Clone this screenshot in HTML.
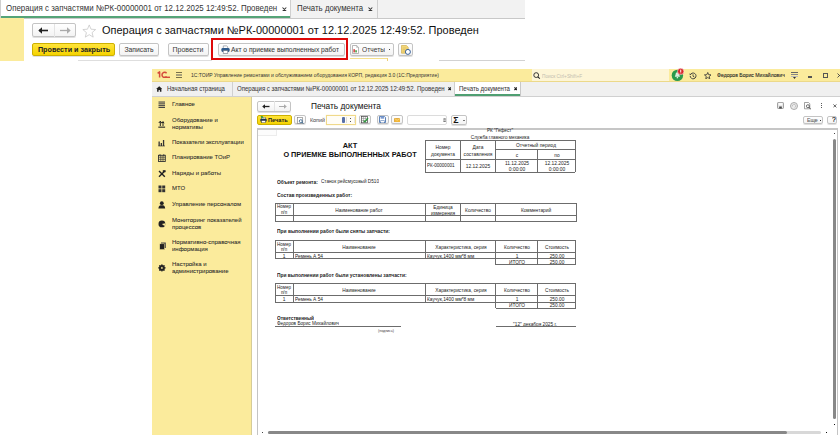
<!DOCTYPE html>
<html><head><meta charset="utf-8">
<style>
*{box-sizing:border-box;margin:0;padding:0}
html,body{width:840px;height:435px;overflow:hidden;background:#fff;font-family:"Liberation Sans",sans-serif;color:#333;position:relative}
.a{position:absolute}
.btn{position:absolute;border:1px solid #c4c4c4;border-radius:2px;background:linear-gradient(#fff,#f3f3f3);box-shadow:0 1px 0 rgba(0,0,0,.12)}
.t{position:absolute;white-space:nowrap;line-height:1;transform-origin:0 0}
</style></head><body>
<div class="a" style="left:0px;top:0px;width:525px;height:18.8px;background:#f2f2f2;border-bottom:1px solid #c8c8c8"></div>
<div class="a" style="left:0px;top:0px;width:1px;height:18px;background:#cfcfcf"></div>
<div class="a" style="left:1px;top:0px;width:289px;height:17.6px;background:#fff"></div>
<div class="a" style="left:1.00px;top:16.30px;width:289.00px;height:1.8px;background:#55a478"></div>
<div class="a" style="left:290.00px;top:0.00px;width:1px;height:18.00px;background:#cfcfcf"></div>
<div class="a" style="left:377.00px;top:0.00px;width:1px;height:18.00px;background:#cfcfcf"></div>
<div class="t" style="left:6.00px;top:4.22px;font-size:31.60px;font-weight:normal;color:#333;transform:scale(0.25,0.275);">Операция с запчастями №РК-00000001 от 12.12.2025 12:49:52. Проведен</div>
<svg class="a" style="left:282px;top:6.6px" width="4.8" height="4.8" viewBox="0 0 4.8 4.8"><path d="M.5 .5 L4.3 4.3 M4.3 .5 L.5 4.3" stroke="#333" stroke-width="1.05"/></svg>
<div class="t" style="left:297.00px;top:4.25px;font-size:31.40px;font-weight:normal;color:#333;transform:scale(0.25,0.275);">Печать документа</div>
<svg class="a" style="left:368.2px;top:6.6px" width="4.8" height="4.8" viewBox="0 0 4.8 4.8"><path d="M.5 .5 L4.3 4.3 M4.3 .5 L.5 4.3" stroke="#333" stroke-width="1.05"/></svg>
<div class="a" style="left:0px;top:18px;width:24.4px;height:43px;background:#fbeb9c"></div>
<div class="btn" style="left:31.5px;top:23.3px;width:44px;height:14.2px;"></div>
<div class="a" style="left:54.00px;top:24.00px;width:1px;height:13.00px;background:#e4e4e4"></div>
<svg class="a" style="left:38px;top:27px" width="11" height="7" viewBox="0 0 11 7"><path d="M1 3.5 H10" stroke="#222" stroke-width="1.6"/><path d="M0.3 3.5 L4 0.3 V6.7Z" fill="#222"/></svg>
<svg class="a" style="left:60px;top:27px" width="11" height="7" viewBox="0 0 11 7"><path d="M0 3.5 H9" stroke="#aaa" stroke-width="1.3"/><path d="M10.7 3.5 L7 0.3 V6.7Z" fill="#aaa"/></svg>
<svg class="a" style="left:81.8px;top:23.6px" width="14.5" height="14.5" viewBox="0 0 24 24"><path d="M12 1.5 L14.9 8.6 L22.6 9.2 L16.7 14.2 L18.5 21.7 L12 17.7 L5.5 21.7 L7.3 14.2 L1.4 9.2 L9.1 8.6Z" fill="none" stroke="#c8c8c8" stroke-width="1.3" stroke-linejoin="round"/></svg>
<div class="t" style="left:101.50px;top:24.96px;font-size:43.92px;font-weight:normal;color:#111;transform:scale(0.25,0.25);">Операция с запчастями №РК-00000001 от 12.12.2025 12:49:52. Проведен</div>
<div class="a" style="left:32px;top:43px;width:83px;height:13px;background:linear-gradient(#ffe43a,#f5d300);border:1px solid #cdb000;border-radius:2px;box-shadow:0 1px 0 rgba(0,0,0,.12)"></div>
<div class="t" style="left:73.70px;top:45.54px;font-size:28.80px;font-weight:bold;color:#222;transform:scale(0.25,0.2625) translateX(-50%);">Провести и закрыть</div>
<div class="btn" style="left:118.5px;top:43.3px;width:40.5px;height:12.3px;"></div>
<div class="t" style="left:138.60px;top:45.64px;font-size:27.16px;font-weight:normal;color:#3a3a3a;transform:scale(0.25,0.265) translateX(-50%);-webkit-text-stroke:0.20px #3a3a3a;">Записать</div>
<div class="btn" style="left:167.5px;top:43.3px;width:41.3px;height:12.3px;"></div>
<div class="t" style="left:188.30px;top:45.75px;font-size:28.00px;font-weight:normal;color:#3a3a3a;transform:scale(0.25,0.25) translateX(-50%);">Провести</div>
<div class="a" style="left:211.2px;top:38px;width:136.6px;height:22.4px;border:2.4px solid #dd0a0a"></div>
<div class="btn" style="left:217.5px;top:43.3px;width:127.5px;height:12.3px;"></div>
<svg class="a" style="left:220.6px;top:45px" width="9" height="9" viewBox="0 0 9 9"><path d="M2.3 3 V0.9 H5.8 L6.7 1.8 V3" fill="#fff" stroke="#8a8f99" stroke-width=".7"/><rect x="0.4" y="3" width="8.2" height="3.9" rx="1.3" fill="#2f5b8c"/><rect x="2.2" y="5.6" width="4.6" height="2.8" fill="#fff" stroke="#6a7180" stroke-width=".6"/></svg>
<div class="t" style="left:231.00px;top:45.71px;font-size:26.72px;font-weight:normal;color:#3a3a3a;transform:scale(0.25,0.265);-webkit-text-stroke:0.20px #3a3a3a;">Акт о приемке выполненных работ</div>
<div class="btn" style="left:350px;top:43.3px;width:43.5px;height:12.3px;"></div>
<svg class="a" style="left:352.2px;top:45.0px" width="7" height="9" viewBox="0 0 7 9"><path d="M.5 .5 H4.6 L6.5 2.4 V8.5 H.5Z" fill="#fff" stroke="#9a9a9a" stroke-width=".7"/><path d="M4.6 .5 V2.4 H6.5" fill="none" stroke="#9a9a9a" stroke-width=".5"/><rect x="1.4" y="4.2" width="1.5" height="3.2" fill="#d23a3a"/><rect x="3.3" y="5.2" width="1.5" height="2.2" fill="#3a9a3a"/></svg>
<div class="t" style="left:361.80px;top:45.72px;font-size:26.60px;font-weight:normal;color:#3a3a3a;transform:scale(0.25,0.265);">Отчеты</div>
<div class="a" style="left:389px;top:49.2px;width:1.3px;height:1.3px;background:#444"></div>
<div class="btn" style="left:397.5px;top:43.3px;width:15px;height:12.3px;"></div>
<svg class="a" style="left:400.6px;top:44.6px" width="10" height="10" viewBox="0 0 10 10"><path d="M.5 .5 H5.4 L7.2 2.3 V8.2 H.5Z" fill="#f3d77a" stroke="#c9a640" stroke-width=".6"/><path d="M1.6 3 H5.6 M1.6 4.6 H4.6 M1.6 6.2 H4" stroke="#d8b85a" stroke-width=".6"/><circle cx="6.9" cy="6.9" r="2.5" fill="#fff" stroke="#355f9a" stroke-width="1"/></svg>
<div class="a" style="left:78.00px;top:60.00px;width:133.50px;height:1.2px;background:#dedede"></div>
<div class="a" style="left:349.50px;top:57.95px;width:38.50px;height:1.3px;background:#f5df8c"></div>
<div class="a" style="left:386.90px;top:58.20px;width:1.2px;height:3.00px;background:#ecd078"></div>
<div class="a" style="left:439.00px;top:59.90px;width:86.00px;height:1.4px;background:#d2d2d2"></div>
<div class="a" style="left:152px;top:68.8px;width:688px;height:13px;background:#fbeb9c;border-bottom:1px solid #ecd98a"></div>
<svg class="a" style="left:156.6px;top:70.8px" width="13.6" height="7.2" viewBox="0 0 13.6 7.2"><path d="M0.6 2.4 L2.6 0.9 V6.6" fill="none" stroke="#d44a3a" stroke-width="1.5" stroke-linejoin="round"/><path d="M9.6 2.2 A2.6 2.6 0 1 0 9.6 5.6" fill="none" stroke="#d44a3a" stroke-width="1.5"/><rect x="7.2" y="5.6" width="6.3" height="1.4" fill="#d44a3a"/></svg>
<div class="a" style="left:176.00px;top:72.00px;width:6.00px;height:1.0px;background:#77704a"></div>
<div class="a" style="left:176.00px;top:74.40px;width:6.20px;height:1.2px;background:#a9a27a"></div>
<div class="a" style="left:176.00px;top:77.00px;width:6.00px;height:1.0px;background:#77704a"></div>
<div class="t" style="left:191.00px;top:72.33px;font-size:20.20px;font-weight:normal;color:#333;transform:scale(0.25,0.285);">1С:ТОИР Управление ремонтами и обслуживанием оборудования КОРП, редакция 3.0 (1С:Предприятие)</div>
<div class="a" style="left:532px;top:69px;width:137.3px;height:12.3px;background:#fdf5d6"></div>
<svg class="a" style="left:533px;top:71.5px" width="8" height="7" viewBox="0 0 8 7"><circle cx="3.2" cy="3.1" r="2.4" fill="none" stroke="#222" stroke-width=".9"/><line x1="4.9" y1="4.8" x2="6.8" y2="6.6" stroke="#222" stroke-width="1.1"/></svg>
<div class="t" style="left:542.00px;top:72.68px;font-size:19.20px;font-weight:normal;color:#c4c0b0;transform:scale(0.25,0.295);">Поиск Ctrl+Shift+F</div>
<svg class="a" style="left:671px;top:68px" width="14" height="14" viewBox="0 0 14 14"><circle cx="6.4" cy="7.4" r="5.7" fill="#2a9a4a"/><path d="M6.4 4.2 C5 4.2 4.6 5.4 4.6 6.6 L3.8 8.8 H9 L8.2 6.6 C8.2 5.4 7.8 4.2 6.4 4.2Z" fill="#d8efdc"/><rect x="5.7" y="9" width="1.4" height="1.3" fill="#d8efdc"/><circle cx="9.7" cy="3.4" r="3.2" fill="#d8262a" stroke="#fff" stroke-width=".5"/><rect x="9.25" y="1.6" width=".95" height="2.6" fill="#fff"/><rect x="9.25" y="4.6" width=".95" height=".7" fill="#fff"/></svg>
<svg class="a" style="left:688.5px;top:71.5px" width="8" height="8" viewBox="0 0 8 8"><path d="M1.2 4 A2.9 2.9 0 1 0 2 1.9" fill="none" stroke="#333" stroke-width=".9"/><path d="M0.6 1.2 L2.4 2.4 L0.8 3.2Z" fill="#333"/><path d="M4 2.3 V4.2 L5.3 5" fill="none" stroke="#333" stroke-width=".8"/></svg>
<svg class="a" style="left:703.8px;top:71.8px" width="7.5" height="7.5" viewBox="0 0 24 24"><path d="M12 1.5 L14.9 8.6 L22.6 9.2 L16.7 14.2 L18.5 21.7 L12 17.7 L5.5 21.7 L7.3 14.2 L1.4 9.2 L9.1 8.6Z" fill="none" stroke="#333" stroke-width="2.6" stroke-linejoin="round"/></svg>
<div class="t" style="left:717.40px;top:72.28px;font-size:20.56px;font-weight:normal;color:#222;transform:scale(0.25,0.285);-webkit-text-stroke:0.32px #222;">Федоров Борис Михайлович</div>
<div class="a" style="left:791.00px;top:72.00px;width:7.00px;height:1px;background:#666"></div>
<div class="a" style="left:791.00px;top:74.00px;width:7.00px;height:1px;background:#888"></div>
<div class="a" style="left:791.00px;top:76.00px;width:7.00px;height:1px;background:#bbb"></div>
<svg class="a" style="left:793px;top:77.3px" width="3" height="2" viewBox="0 0 3 2"><path d="M0 0H3L1.5 2Z" fill="#333"/></svg>
<div class="a" style="left:807.60px;top:76.45px;width:4.40px;height:1.1px;background:#555"></div>
<div class="a" style="left:823px;top:72.8px;width:5px;height:4.8px;border:1px solid #555"></div>
<svg class="a" style="left:837.4px;top:72.6px" width="5" height="5" viewBox="0 0 5 5"><path d="M.5 .5 L4.5 4.5 M4.5 .5 L.5 4.5" stroke="#444" stroke-width=".9"/></svg>
<div class="a" style="left:152px;top:81.8px;width:688px;height:15.2px;background:#f0f0f0;border-bottom:1px solid #d0d0d0"></div>
<svg class="a" style="left:155.5px;top:85.5px" width="6.5" height="6" viewBox="0 0 6.5 6"><path d="M3.25 0.2 L6.4 3 H5.4 V5.8 H3.9 V4 H2.6 V5.8 H1.1 V3 H0.1Z" fill="#222"/></svg>
<div class="t" style="left:167.00px;top:86.31px;font-size:23.96px;font-weight:normal;color:#3a3a3a;transform:scale(0.25,0.265);-webkit-text-stroke:0.20px #3a3a3a;">Начальная страница</div>
<div class="a" style="left:232.00px;top:82.00px;width:1px;height:14.00px;background:#d0d0d0"></div>
<div class="t" style="left:237.00px;top:86.27px;font-size:24.20px;font-weight:normal;color:#3a3a3a;transform:scale(0.25,0.265);-webkit-text-stroke:0.20px #3a3a3a;">Операция с запчастями №РК-00000001 от 12.12.2025 12:49:52. Проведен</div>
<svg class="a" style="left:448.1px;top:87.3px" width="3.4" height="3.4" viewBox="0 0 3.4 3.4"><path d="M.4 .4 L3 3 M3 .4 L.4 3" stroke="#222" stroke-width="1.15"/></svg>
<div class="a" style="left:454.00px;top:82.00px;width:1px;height:14.00px;background:#d0d0d0"></div>
<div class="a" style="left:455px;top:82px;width:65px;height:14px;background:#fff"></div>
<div class="a" style="left:455.00px;top:94.15px;width:65.00px;height:1.7px;background:#4f9f72"></div>
<div class="a" style="left:520.00px;top:82.00px;width:1px;height:14.00px;background:#c8c8c8"></div>
<div class="t" style="left:459.00px;top:86.27px;font-size:24.20px;font-weight:normal;color:#3a3a3a;transform:scale(0.25,0.265);-webkit-text-stroke:0.20px #3a3a3a;">Печать документа</div>
<svg class="a" style="left:513.6px;top:87.3px" width="3.4" height="3.4" viewBox="0 0 3.4 3.4"><path d="M.4 .4 L3 3 M3 .4 L.4 3" stroke="#222" stroke-width="1.15"/></svg>
<div class="a" style="left:152px;top:97px;width:100px;height:339px;background:#fbeb9c;border-right:1px solid #d6cc98"></div>
<div class="t" style="left:171.60px;top:101.03px;font-size:24.00px;font-weight:normal;color:#2a2a2a;transform:scale(0.25,0.255);-webkit-text-stroke:0.24px #2a2a2a;">Главное</div>
<svg class="a" style="left:158.4px;top:101px" width="8" height="8" viewBox="0 0 8 8"><rect x=".5" y=".5" width="6.5" height="1.1" fill="#444"/><rect x=".5" y="2.3" width="6.5" height="1.1" fill="#444"/><rect x=".5" y="4.1" width="6.5" height="1.1" fill="#444"/><rect x=".5" y="5.9" width="6.5" height="1.1" fill="#444"/></svg>
<div class="t" style="left:171.60px;top:116.63px;font-size:24.00px;font-weight:normal;color:#2a2a2a;transform:scale(0.25,0.255);-webkit-text-stroke:0.24px #2a2a2a;">Оборудование и</div>
<div class="t" style="left:171.60px;top:123.63px;font-size:24.00px;font-weight:normal;color:#2a2a2a;transform:scale(0.25,0.255);-webkit-text-stroke:0.24px #2a2a2a;">нормативы</div>
<svg class="a" style="left:158.4px;top:120px" width="8" height="8" viewBox="0 0 8 8"><path d="M2.3 6 V1.5 M0.8 3 L2.3 1.2 L3.8 3 M5 6 V1.5 M3.9 3.2 L5 1.8 L6.1 3.2" stroke="#222" stroke-width="1" fill="none"/><rect x=".3" y="6.6" width="6.8" height="1.1" fill="#222"/></svg>
<div class="t" style="left:171.60px;top:138.83px;font-size:24.00px;font-weight:normal;color:#2a2a2a;transform:scale(0.25,0.255);-webkit-text-stroke:0.24px #2a2a2a;">Показатели эксплуатации</div>
<svg class="a" style="left:158.4px;top:139px" width="8" height="8" viewBox="0 0 8 8"><rect x=".5" y="2.5" width="1.3" height="4.5" fill="#333"/><rect x="2.7" y="4" width="1.3" height="3" fill="#333"/><rect x="4.9" y="1" width="1.3" height="6" fill="#333"/><rect x=".3" y="6.6" width="6.6" height=".7" fill="#333"/></svg>
<div class="t" style="left:171.60px;top:153.83px;font-size:24.00px;font-weight:normal;color:#2a2a2a;transform:scale(0.25,0.255);-webkit-text-stroke:0.24px #2a2a2a;">Планирование ТОиР</div>
<svg class="a" style="left:158.4px;top:153.5px" width="8" height="8" viewBox="0 0 8 8"><rect x=".5" y="1.3" width="6.8" height="6.2" fill="none" stroke="#333" stroke-width=".9"/><path d="M.5 3.2 H7.3 M2.8 1.3 V7.5 M5 1.3 V7.5 M.5 5.3 H7.3" stroke="#333" stroke-width=".7"/><path d="M2 .2 V2 M5.8 .2 V2" stroke="#333" stroke-width=".9"/></svg>
<div class="t" style="left:171.60px;top:170.03px;font-size:24.00px;font-weight:normal;color:#2a2a2a;transform:scale(0.25,0.255);-webkit-text-stroke:0.24px #2a2a2a;">Наряды и работы</div>
<svg class="a" style="left:158.4px;top:170px" width="8" height="8" viewBox="0 0 8 8"><path d="M1 1 L6.8 6.8 M6.8 1 L1 6.8" stroke="#222" stroke-width="1.4"/><rect x="4.8" y=".2" width="2.8" height="2" fill="#222"/></svg>
<div class="t" style="left:171.60px;top:185.33px;font-size:24.00px;font-weight:normal;color:#2a2a2a;transform:scale(0.25,0.255);-webkit-text-stroke:0.24px #2a2a2a;">МТО</div>
<svg class="a" style="left:158.4px;top:185.3px" width="8" height="8" viewBox="0 0 8 8"><rect x=".5" y=".5" width="3" height="3" fill="#333"/><rect x="4.2" y=".5" width="3" height="3" fill="#333"/><rect x=".5" y="4.2" width="3" height="3" fill="#333"/><rect x="4.2" y="4.2" width="3" height="3" fill="#333"/></svg>
<div class="t" style="left:171.60px;top:201.13px;font-size:24.00px;font-weight:normal;color:#2a2a2a;transform:scale(0.25,0.255);-webkit-text-stroke:0.24px #2a2a2a;">Управление персоналом</div>
<svg class="a" style="left:158.4px;top:201px" width="8" height="8" viewBox="0 0 8 8"><circle cx="3.8" cy="2.2" r="1.9" fill="#222"/><path d="M.4 7.6 C.6 4.8 2 4.3 3.8 4.3 C5.6 4.3 7 4.8 7.2 7.6Z" fill="#222"/></svg>
<div class="t" style="left:171.60px;top:216.83px;font-size:24.00px;font-weight:normal;color:#2a2a2a;transform:scale(0.25,0.255);-webkit-text-stroke:0.24px #2a2a2a;">Мониторинг показателей</div>
<div class="t" style="left:171.60px;top:223.83px;font-size:24.00px;font-weight:normal;color:#2a2a2a;transform:scale(0.25,0.255);-webkit-text-stroke:0.24px #2a2a2a;">процессов</div>
<svg class="a" style="left:158.2px;top:219.7px" width="8" height="8" viewBox="0 0 8 8"><circle cx="3.9" cy="3.9" r="3.4" fill="#222"/><path d="M3.9 3.9 L7.3 3.2 A3.4 3.4 0 0 1 6.5 6 Z" fill="#fbeb9c"/></svg>
<div class="t" style="left:171.60px;top:238.53px;font-size:24.00px;font-weight:normal;color:#2a2a2a;transform:scale(0.25,0.255);-webkit-text-stroke:0.24px #2a2a2a;">Нормативно-справочная</div>
<div class="t" style="left:171.60px;top:245.53px;font-size:24.00px;font-weight:normal;color:#2a2a2a;transform:scale(0.25,0.255);-webkit-text-stroke:0.24px #2a2a2a;">информация</div>
<svg class="a" style="left:158.6px;top:241.8px" width="8" height="8" viewBox="0 0 8 8"><rect x="2" y=".5" width="4.8" height="5.5" fill="#444"/><rect x=".7" y="1.8" width="4.8" height="5.8" fill="#222" stroke="#fbeb9c" stroke-width=".5"/></svg>
<div class="t" style="left:171.60px;top:261.03px;font-size:24.00px;font-weight:normal;color:#2a2a2a;transform:scale(0.25,0.255);-webkit-text-stroke:0.24px #2a2a2a;">Настройка и</div>
<div class="t" style="left:171.60px;top:268.03px;font-size:24.00px;font-weight:normal;color:#2a2a2a;transform:scale(0.25,0.255);-webkit-text-stroke:0.24px #2a2a2a;">администрирование</div>
<svg class="a" style="left:158.4px;top:264.2px" width="8" height="8" viewBox="0 0 8 8"><circle cx="3.9" cy="3.9" r="2.2" fill="none" stroke="#222" stroke-width="1.5"/><path d="M3.9 .2 V7.6 M.2 3.9 H7.6 M1.3 1.3 L6.5 6.5 M6.5 1.3 L1.3 6.5" stroke="#222" stroke-width="1.1"/><circle cx="3.9" cy="3.9" r=".9" fill="#fbeb9c"/></svg>
<div class="t" style="left:311.00px;top:101.94px;font-size:33.20px;font-weight:normal;color:#111;transform:scale(0.25,0.25);">Печать документа</div>
<div class="btn" style="left:257.2px;top:100.5px;width:33.4px;height:11px;"></div>
<div class="a" style="left:274.00px;top:101.00px;width:1px;height:10.00px;background:#e4e4e4"></div>
<svg class="a" style="left:261.5px;top:103.8px" width="8" height="5" viewBox="0 0 8 5"><path d="M1 2.5 H7.5" stroke="#222" stroke-width="1.3"/><path d="M0.2 2.5 L3 0.2 V4.8Z" fill="#222"/></svg>
<svg class="a" style="left:278.5px;top:103.8px" width="8" height="5" viewBox="0 0 8 5"><path d="M0 2.5 H6.5" stroke="#aaa" stroke-width="1"/><path d="M7.8 2.5 L5 0.2 V4.8Z" fill="#aaa"/></svg>
<div class="a" style="left:257.2px;top:115.3px;width:34.6px;height:9.6px;background:linear-gradient(#ffe43a,#f5d300);border:1px solid #cdb000;border-radius:2px"></div>
<svg class="a" style="left:259.6px;top:116.2px" width="7" height="7" viewBox="0 0 7 7"><rect x="1.6" y="1.2" width="3.8" height="2" fill="#fff" stroke="#555" stroke-width=".5"/><rect x=".3" y="2.8" width="6.4" height="2.8" rx=".9" fill="#1f3550"/><rect x="1.6" y="4.6" width="3.8" height="2.2" fill="#fff" stroke="#444" stroke-width=".5"/><path d="M.6 .1 L3.2 .1 L2.6 .8 L3.8 2 L3 2.6 L1.9 1.4 L1.2 2.1Z" fill="#3aa040"/></svg>
<div class="t" style="left:268.00px;top:116.58px;font-size:22.60px;font-weight:bold;color:#222;transform:scale(0.25,0.275);">Печать</div>
<div class="btn" style="left:294.3px;top:115.4px;width:11.4px;height:9px;"></div>
<svg class="a" style="left:296.5px;top:116.5px" width="7" height="7" viewBox="0 0 7 7"><rect x=".5" y=".4" width="4.8" height="6" fill="#fff" stroke="#777" stroke-width=".6"/><circle cx="3.8" cy="4.2" r="1.5" fill="none" stroke="#2b5c8a" stroke-width=".8"/><path d="M4.8 5.2 L6.6 6.8" stroke="#2b5c8a" stroke-width=".9"/></svg>
<div class="t" style="left:309.70px;top:116.98px;font-size:21.44px;font-weight:normal;color:#555;transform:scale(0.25,0.265);-webkit-text-stroke:0.20px #555;">Копий</div>
<div class="a" style="left:326.4px;top:115.1px;width:30px;height:9.6px;border:1px solid #f0d98a;background:#fffdf6;box-shadow:0 0 1px #f6e6a8"></div>
<div class="a" style="left:341.8px;top:116.6px;width:2.8px;height:6.6px;background:#5870a8;border-radius:1px"></div>
<div class="a" style="left:345.85px;top:116.50px;width:0.7px;height:6.70px;background:#dcdcdc"></div>
<div class="a" style="left:350.1px;top:117.6px;width:1px;height:1px;background:#555"></div>
<div class="a" style="left:350.1px;top:120.6px;width:1px;height:1px;background:#555"></div>
<div class="a" style="left:353.85px;top:116.50px;width:0.7px;height:6.70px;background:#e4e4e4"></div>
<div class="btn" style="left:359.3px;top:115.4px;width:11.4px;height:9px;"></div>
<svg class="a" style="left:361.3px;top:116.3px" width="7.5" height="7.5" viewBox="0 0 7.5 7.5"><rect x=".4" y=".4" width="6.2" height="6.4" fill="#fff" stroke="#444" stroke-width=".7"/><path d="M.4 2.4 H6.6 M.4 4.5 H6.6 M2.4 .4 V6.8 M4.4 .4 V6.8" stroke="#666" stroke-width=".45"/><path d="M2.6 4.6 L3.9 5.9 L7 2.2" fill="none" stroke="#2a9a3a" stroke-width="1.3"/></svg>
<div class="btn" style="left:377px;top:115.4px;width:11.6px;height:9px;"></div>
<svg class="a" style="left:379.4px;top:116.4px" width="7" height="7" viewBox="0 0 7 7"><path d="M.5 .5 H5.6 L6.5 1.4 V6.5 H.5Z" fill="#fff" stroke="#4a74b0" stroke-width=".9"/><rect x="1.6" y=".5" width="3.6" height="2.2" fill="#7d9bd0"/><rect x="1.5" y="4.2" width="4" height="2.3" fill="#4a74b0"/><rect x="2" y="4.7" width="3" height="1.8" fill="#fff"/></svg>
<div class="btn" style="left:391.4px;top:115.4px;width:11.5px;height:9px;"></div>
<svg class="a" style="left:393.8px;top:117.6px" width="6.4" height="4.4" viewBox="0 0 6.4 4.4"><rect x=".2" y=".2" width="6" height="4" fill="#f2b73a" stroke="#c88a20" stroke-width=".4"/><path d="M.2 .2 L3.2 2.4 L6.2 .2" fill="none" stroke="#fbe2a0" stroke-width=".6"/></svg>
<div class="a" style="left:407px;top:115.1px;width:40px;height:9.6px;border:1px solid #dcdcdc;border-radius:2px;background:#fff"></div>
<svg class="a" style="left:443.2px;top:117.6px" width="3.2" height="4.4" viewBox="0 0 3.2 4.4"><ellipse cx="1.6" cy="2.2" rx="1.5" ry="2.1" fill="#c4c4c4"/><rect x=".5" y=".5" width="2.2" height=".9" fill="#777"/><rect x=".5" y="3" width="2.2" height=".9" fill="#777"/></svg>
<div class="btn" style="left:451.4px;top:115.1px;width:15.3px;height:9.6px;"></div>
<div class="t" style="left:456.30px;top:115.36px;font-size:35.20px;font-weight:bold;color:#111;transform:scale(0.25,0.25) translateX(-50%);">Σ</div>
<svg class="a" style="left:462.5px;top:119.5px" width="2" height="1.5" viewBox="0 0 2 1.5"><path d="M0 0H2L1 1.5Z" fill="#333"/></svg>
<svg class="a" style="left:776.6px;top:102.2px" width="7" height="7" viewBox="0 0 7 7"><rect x=".5" y=".5" width="6" height="6" rx=".7" fill="#e6e6e6" stroke="#8c8c8c" stroke-width=".8"/><rect x="1.8" y=".9" width="3.4" height="2.3" fill="#fafafa"/><rect x="2.2" y="4.5" width="2.6" height="2" fill="#4a4a4a"/></svg>
<svg class="a" style="left:789.9px;top:101.9px" width="8" height="8" viewBox="0 0 8 8"><circle cx="4" cy="4" r="3.5" fill="#ececec" stroke="#a4a4a4" stroke-width=".9"/><path d="M2.4 4.4 A1.7 1.7 0 1 1 4.6 5.6" fill="none" stroke="#b4b4b4" stroke-width=".8"/></svg>
<svg class="a" style="left:804px;top:102px" width="7.5" height="7.5" viewBox="0 0 7.5 7.5"><path d="M.5 .5 H4.5 L5.8 1.8 V6.8 H.5Z" fill="#fff" stroke="#7a7a7a" stroke-width=".7"/><circle cx="3.9" cy="4.2" r="1.5" fill="none" stroke="#444" stroke-width=".75"/><path d="M4.9 5.3 L6.9 7.2" stroke="#444" stroke-width=".9"/></svg>
<div class="a" style="left:820.5px;top:103.1px;width:1.4px;height:1.4px;background:#5a5a5a"></div>
<div class="a" style="left:820.5px;top:105.1px;width:1.4px;height:1.4px;background:#5a5a5a"></div>
<div class="a" style="left:820.5px;top:107.1px;width:1.4px;height:1.4px;background:#5a5a5a"></div>
<svg class="a" style="left:832.9px;top:103.8px" width="3.8" height="3.8" viewBox="0 0 3.8 3.8"><path d="M.4 .4 L3.4 3.4 M3.4 .4 L.4 3.4" stroke="#333" stroke-width=".75"/></svg>
<div class="btn" style="left:802.9px;top:115.5px;width:20.4px;height:8.8px;"></div>
<div class="t" style="left:807.30px;top:116.91px;font-size:21.20px;font-weight:normal;color:#555;transform:scale(0.25,0.265);-webkit-text-stroke:0.20px #555;">Еще</div>
<div class="a" style="left:819.6px;top:119.6px;width:1.1px;height:1.1px;background:#333"></div>
<div class="btn" style="left:826.7px;top:115.5px;width:10.4px;height:8.8px;"></div>
<div class="t" style="left:832.00px;top:115.94px;font-size:27.20px;font-weight:normal;color:#111;transform:scale(0.25,0.265);-webkit-text-stroke:0.60px #111;">?</div>
<div class="a" style="left:257px;top:128px;width:581px;height:310px;border:1px solid #c4c4c4;border-top:2px solid #c6c6c6"></div>
<div class="a" style="left:258px;top:130px;width:19px;height:5.5px;border-right:1px solid #ececec;border-bottom:1px solid #ececec;background:#fcfcfc"></div>
<div class="t" style="left:500.00px;top:127.98px;font-size:18.60px;font-weight:normal;color:#222;transform:scale(0.25,0.295) translateX(-50%);">РК "Гефест"</div>
<div class="t" style="left:500.00px;top:134.68px;font-size:18.60px;font-weight:normal;color:#222;transform:scale(0.25,0.295) translateX(-50%);">Служба главного механика</div>
<div class="a" style="left:425.00px;top:140.00px;width:150.00px;height:1.0px;background:#6c6c6c"></div>
<div class="a" style="left:425.00px;top:172.00px;width:150.00px;height:1.0px;background:#6c6c6c"></div>
<div class="a" style="left:425.00px;top:140.00px;width:1.0px;height:32.00px;background:#6c6c6c"></div>
<div class="a" style="left:575.00px;top:140.00px;width:1.0px;height:32.00px;background:#6c6c6c"></div>
<div class="a" style="left:425.00px;top:159.00px;width:150.00px;height:1.0px;background:#6c6c6c"></div>
<div class="a" style="left:496.00px;top:149.00px;width:79.00px;height:1.0px;background:#6c6c6c"></div>
<div class="a" style="left:460.00px;top:140.00px;width:1.0px;height:32.00px;background:#6c6c6c"></div>
<div class="a" style="left:495.00px;top:140.00px;width:1.0px;height:32.00px;background:#6c6c6c"></div>
<div class="a" style="left:537.00px;top:150.00px;width:1.0px;height:22.00px;background:#6c6c6c"></div>
<div class="t" style="left:443.00px;top:144.12px;font-size:19.60px;font-weight:normal;color:#222;transform:scale(0.25,0.295) translateX(-50%);">Номер</div>
<div class="t" style="left:443.00px;top:150.52px;font-size:19.60px;font-weight:normal;color:#222;transform:scale(0.25,0.295) translateX(-50%);">документа</div>
<div class="t" style="left:478.00px;top:144.12px;font-size:19.60px;font-weight:normal;color:#222;transform:scale(0.25,0.295) translateX(-50%);">Дата</div>
<div class="t" style="left:478.00px;top:150.52px;font-size:19.60px;font-weight:normal;color:#222;transform:scale(0.25,0.295) translateX(-50%);">составления</div>
<div class="t" style="left:535.50px;top:142.12px;font-size:19.60px;font-weight:normal;color:#222;transform:scale(0.25,0.295) translateX(-50%);">Отчетный период</div>
<div class="t" style="left:516.60px;top:152.32px;font-size:19.60px;font-weight:normal;color:#222;transform:scale(0.25,0.295) translateX(-50%);">с</div>
<div class="t" style="left:556.60px;top:152.32px;font-size:19.60px;font-weight:normal;color:#222;transform:scale(0.25,0.295) translateX(-50%);">по</div>
<div class="t" style="left:427.00px;top:163.34px;font-size:18.24px;font-weight:normal;color:#222;transform:scale(0.25,0.295);">РК-00000001</div>
<div class="t" style="left:478.00px;top:163.12px;font-size:19.60px;font-weight:normal;color:#222;transform:scale(0.25,0.295) translateX(-50%);">12.12.2025</div>
<div class="t" style="left:516.60px;top:160.12px;font-size:19.60px;font-weight:normal;color:#222;transform:scale(0.25,0.295) translateX(-50%);">11.12.2025</div>
<div class="t" style="left:516.60px;top:165.92px;font-size:19.60px;font-weight:normal;color:#222;transform:scale(0.25,0.295) translateX(-50%);">0:00:00</div>
<div class="t" style="left:556.60px;top:160.12px;font-size:19.60px;font-weight:normal;color:#222;transform:scale(0.25,0.295) translateX(-50%);">12.12.2025</div>
<div class="t" style="left:556.60px;top:165.92px;font-size:19.60px;font-weight:normal;color:#222;transform:scale(0.25,0.295) translateX(-50%);">0:00:00</div>
<div class="t" style="left:350.30px;top:141.60px;font-size:29.80px;font-weight:bold;color:#111;transform:scale(0.25,0.25) translateX(-50%);">АКТ</div>
<div class="t" style="left:350.30px;top:151.49px;font-size:29.20px;font-weight:bold;color:#111;transform:scale(0.25,0.25) translateX(-50%);">О ПРИЕМКЕ ВЫПОЛНЕННЫХ РАБОТ</div>
<div class="t" style="left:276.50px;top:179.35px;font-size:19.40px;font-weight:bold;color:#222;transform:scale(0.25,0.295);">Объект ремонта:</div>
<div class="t" style="left:321.00px;top:179.48px;font-size:18.64px;font-weight:normal;color:#222;transform:scale(0.25,0.295);">Станок рейсмусовый D510</div>
<div class="t" style="left:276.50px;top:191.99px;font-size:19.80px;font-weight:bold;color:#222;transform:scale(0.25,0.295);">Состав произведенных работ:</div>
<div class="a" style="left:275.00px;top:203.00px;width:301.00px;height:1.0px;background:#6c6c6c"></div>
<div class="a" style="left:275.00px;top:221.00px;width:301.00px;height:1.0px;background:#6c6c6c"></div>
<div class="a" style="left:275.00px;top:203.00px;width:1.0px;height:19.00px;background:#6c6c6c"></div>
<div class="a" style="left:576.00px;top:203.00px;width:1.0px;height:19.00px;background:#6c6c6c"></div>
<div class="a" style="left:275.00px;top:215.00px;width:301.00px;height:1.0px;background:#6c6c6c"></div>
<div class="a" style="left:293.00px;top:203.00px;width:1.0px;height:19.00px;background:#6c6c6c"></div>
<div class="a" style="left:425.00px;top:203.00px;width:1.0px;height:19.00px;background:#6c6c6c"></div>
<div class="a" style="left:460.00px;top:203.00px;width:1.0px;height:19.00px;background:#6c6c6c"></div>
<div class="a" style="left:495.00px;top:203.00px;width:1.0px;height:19.00px;background:#6c6c6c"></div>
<div class="t" style="left:284.30px;top:204.35px;font-size:18.20px;font-weight:normal;color:#222;transform:scale(0.25,0.295) translateX(-50%);">Номер</div>
<div class="t" style="left:284.30px;top:209.75px;font-size:18.20px;font-weight:normal;color:#222;transform:scale(0.25,0.295) translateX(-50%);">п/п</div>
<div class="t" style="left:359.20px;top:206.88px;font-size:19.20px;font-weight:normal;color:#222;transform:scale(0.25,0.295) translateX(-50%);">Наименование работ</div>
<div class="t" style="left:443.10px;top:204.18px;font-size:19.20px;font-weight:normal;color:#222;transform:scale(0.25,0.295) translateX(-50%);">Единица</div>
<div class="t" style="left:443.10px;top:209.58px;font-size:19.20px;font-weight:normal;color:#222;transform:scale(0.25,0.295) translateX(-50%);">измерения</div>
<div class="t" style="left:478.30px;top:206.88px;font-size:19.20px;font-weight:normal;color:#222;transform:scale(0.25,0.295) translateX(-50%);">Количество</div>
<div class="t" style="left:535.80px;top:206.88px;font-size:19.20px;font-weight:normal;color:#222;transform:scale(0.25,0.295) translateX(-50%);">Комментарий</div>
<div class="t" style="left:276.80px;top:228.32px;font-size:19.60px;font-weight:bold;color:#222;transform:scale(0.25,0.295);">При выполнении работ были сняты запчасти:</div>
<div class="a" style="left:275.00px;top:240.00px;width:301.00px;height:1.0px;background:#6c6c6c"></div>
<div class="a" style="left:275.00px;top:258.00px;width:301.00px;height:1.0px;background:#6c6c6c"></div>
<div class="a" style="left:275.00px;top:240.00px;width:1.0px;height:19.00px;background:#6c6c6c"></div>
<div class="a" style="left:575.00px;top:240.00px;width:1.0px;height:25.00px;background:#6c6c6c"></div>
<div class="a" style="left:275.00px;top:252.00px;width:301.00px;height:1.0px;background:#6c6c6c"></div>
<div class="a" style="left:496.00px;top:264.00px;width:80.00px;height:1.0px;background:#6c6c6c"></div>
<div class="a" style="left:293.00px;top:240.00px;width:1.0px;height:19.00px;background:#6c6c6c"></div>
<div class="a" style="left:425.00px;top:240.00px;width:1.0px;height:19.00px;background:#6c6c6c"></div>
<div class="a" style="left:495.00px;top:240.00px;width:1.0px;height:25.00px;background:#6c6c6c"></div>
<div class="a" style="left:537.00px;top:240.00px;width:1.0px;height:25.00px;background:#6c6c6c"></div>
<div class="t" style="left:284.30px;top:241.55px;font-size:18.20px;font-weight:normal;color:#222;transform:scale(0.25,0.295) translateX(-50%);">Номер</div>
<div class="t" style="left:284.30px;top:246.85px;font-size:18.20px;font-weight:normal;color:#222;transform:scale(0.25,0.295) translateX(-50%);">п/п</div>
<div class="t" style="left:359.30px;top:243.98px;font-size:19.20px;font-weight:normal;color:#222;transform:scale(0.25,0.295) translateX(-50%);">Наименование</div>
<div class="t" style="left:460.50px;top:243.98px;font-size:19.20px;font-weight:normal;color:#222;transform:scale(0.25,0.295) translateX(-50%);">Характеристика, серия</div>
<div class="t" style="left:516.70px;top:243.98px;font-size:19.20px;font-weight:normal;color:#222;transform:scale(0.25,0.295) translateX(-50%);">Количество</div>
<div class="t" style="left:556.60px;top:243.98px;font-size:19.20px;font-weight:normal;color:#222;transform:scale(0.25,0.295) translateX(-50%);">Стоимость</div>
<div class="t" style="left:284.30px;top:253.18px;font-size:19.20px;font-weight:normal;color:#222;transform:scale(0.25,0.295) translateX(-50%);">1</div>
<div class="t" style="left:294.50px;top:253.18px;font-size:19.20px;font-weight:normal;color:#222;transform:scale(0.25,0.295);">Ремень А 54</div>
<div class="t" style="left:426.50px;top:253.18px;font-size:19.20px;font-weight:normal;color:#222;transform:scale(0.25,0.295);">Каучук,1400 мм*8 мм</div>
<div class="t" style="left:516.70px;top:253.18px;font-size:19.20px;font-weight:normal;color:#222;transform:scale(0.25,0.295) translateX(-50%);">1</div>
<div class="t" style="left:556.60px;top:253.18px;font-size:19.20px;font-weight:normal;color:#222;transform:scale(0.25,0.295) translateX(-50%);">250.00</div>
<div class="t" style="left:516.70px;top:259.28px;font-size:19.20px;font-weight:normal;color:#222;transform:scale(0.25,0.295) translateX(-50%);">ИТОГО</div>
<div class="t" style="left:556.60px;top:259.28px;font-size:19.20px;font-weight:normal;color:#222;transform:scale(0.25,0.295) translateX(-50%);">250.00</div>
<div class="t" style="left:276.80px;top:271.63px;font-size:19.52px;font-weight:bold;color:#222;transform:scale(0.25,0.295);">При выполнении работ были установлены запчасти:</div>
<div class="a" style="left:275.00px;top:283.00px;width:301.00px;height:1.0px;background:#6c6c6c"></div>
<div class="a" style="left:275.00px;top:302.00px;width:301.00px;height:1.0px;background:#6c6c6c"></div>
<div class="a" style="left:275.00px;top:283.00px;width:1.0px;height:19.00px;background:#6c6c6c"></div>
<div class="a" style="left:575.00px;top:283.00px;width:1.0px;height:25.00px;background:#6c6c6c"></div>
<div class="a" style="left:275.00px;top:295.00px;width:301.00px;height:1.0px;background:#6c6c6c"></div>
<div class="a" style="left:496.00px;top:308.00px;width:80.00px;height:1.0px;background:#6c6c6c"></div>
<div class="a" style="left:293.00px;top:283.00px;width:1.0px;height:19.00px;background:#6c6c6c"></div>
<div class="a" style="left:425.00px;top:283.00px;width:1.0px;height:19.00px;background:#6c6c6c"></div>
<div class="a" style="left:495.00px;top:283.00px;width:1.0px;height:25.00px;background:#6c6c6c"></div>
<div class="a" style="left:537.00px;top:283.00px;width:1.0px;height:25.00px;background:#6c6c6c"></div>
<div class="t" style="left:284.30px;top:284.65px;font-size:18.20px;font-weight:normal;color:#222;transform:scale(0.25,0.295) translateX(-50%);">Номер</div>
<div class="t" style="left:284.30px;top:289.95px;font-size:18.20px;font-weight:normal;color:#222;transform:scale(0.25,0.295) translateX(-50%);">п/п</div>
<div class="t" style="left:359.30px;top:287.08px;font-size:19.20px;font-weight:normal;color:#222;transform:scale(0.25,0.295) translateX(-50%);">Наименование</div>
<div class="t" style="left:460.50px;top:287.08px;font-size:19.20px;font-weight:normal;color:#222;transform:scale(0.25,0.295) translateX(-50%);">Характеристика, серия</div>
<div class="t" style="left:516.70px;top:287.08px;font-size:19.20px;font-weight:normal;color:#222;transform:scale(0.25,0.295) translateX(-50%);">Количество</div>
<div class="t" style="left:556.60px;top:287.08px;font-size:19.20px;font-weight:normal;color:#222;transform:scale(0.25,0.295) translateX(-50%);">Стоимость</div>
<div class="t" style="left:284.30px;top:296.28px;font-size:19.20px;font-weight:normal;color:#222;transform:scale(0.25,0.295) translateX(-50%);">1</div>
<div class="t" style="left:294.50px;top:296.28px;font-size:19.20px;font-weight:normal;color:#222;transform:scale(0.25,0.295);">Ремень А 54</div>
<div class="t" style="left:426.50px;top:296.28px;font-size:19.20px;font-weight:normal;color:#222;transform:scale(0.25,0.295);">Каучук,1400 мм*8 мм</div>
<div class="t" style="left:516.70px;top:296.28px;font-size:19.20px;font-weight:normal;color:#222;transform:scale(0.25,0.295) translateX(-50%);">1</div>
<div class="t" style="left:556.60px;top:296.28px;font-size:19.20px;font-weight:normal;color:#222;transform:scale(0.25,0.295) translateX(-50%);">250.00</div>
<div class="t" style="left:516.70px;top:302.38px;font-size:19.20px;font-weight:normal;color:#222;transform:scale(0.25,0.295) translateX(-50%);">ИТОГО</div>
<div class="t" style="left:556.60px;top:302.38px;font-size:19.20px;font-weight:normal;color:#222;transform:scale(0.25,0.295) translateX(-50%);">250.00</div>
<div class="t" style="left:276.80px;top:314.91px;font-size:19.04px;font-weight:bold;color:#222;transform:scale(0.25,0.295);">Ответственный</div>
<div class="t" style="left:276.80px;top:320.86px;font-size:18.76px;font-weight:normal;color:#222;transform:scale(0.25,0.295);">Федоров Борис Михайлович</div>
<div class="a" style="left:275.00px;top:326.05px;width:126.00px;height:0.9px;background:#6c6c6c"></div>
<div class="t" style="left:385.50px;top:327.66px;font-size:14.40px;font-weight:normal;color:#444;transform:scale(0.25,0.295) translateX(-50%);">(подпись)</div>
<div class="t" style="left:534.60px;top:321.32px;font-size:19.00px;font-weight:normal;color:#222;transform:scale(0.25,0.295) translateX(-50%);">"12" декабря 2025 г.</div>
<div class="a" style="left:496.00px;top:326.05px;width:80.00px;height:0.9px;background:#6c6c6c"></div>
<div class="a" style="left:832.6px;top:138.6px;width:3.3px;height:280.4px;border-radius:2px;background:#888"></div>
<div class="a" style="left:833.8px;top:133px;width:1.2px;height:1.2px;background:#444"></div>
<div class="a" style="left:833.8px;top:423.6px;width:1.4px;height:1.4px;background:#111"></div>
<div class="a" style="left:268px;top:430.6px;width:552.7px;height:3.2px;border-radius:2px;background:#d8d8d8"></div>
<div class="a" style="left:268px;top:430.6px;width:519px;height:3.2px;border-radius:2px;background:#888"></div>
<div class="a" style="left:262px;top:432px;width:1.4px;height:1px;background:#444"></div>
<div class="a" style="left:825.5px;top:432px;width:1.4px;height:1.4px;background:#111"></div>
</body></html>
